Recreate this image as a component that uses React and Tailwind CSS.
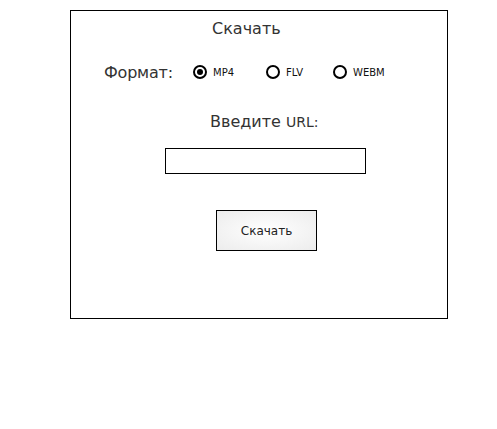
import React from 'react';

function Radio({ label, checked, className = '' }) {
  return (
    <label className={`flex items-center gap-[6px] ${className}`}>
      <span className="w-[14px] h-[14px] rounded-full border-2 border-black flex items-center justify-center">
        {checked && <span className="w-[6px] h-[6px] rounded-full bg-black"></span>}
      </span>
      <span className="text-[10px] leading-[13px] text-[#111]">{label}</span>
    </label>
  );
}

export default function App() {
  return (
    <div className="w-[497px] h-[429px] bg-white pt-[10px] pl-[70px]" style={{ fontFamily: '"DejaVu Sans", sans-serif' }}>
      <div className="w-[378px] h-[309px] border border-black flex flex-col items-start text-[#333]">
        <div className="ml-[141px] mt-[8px] text-[16px] leading-[19px]">Скачать</div>

        <div className="ml-[33px] mt-[24px] h-[20px] flex items-center">
          <span className="w-[89px] text-[16px] leading-[19px] tracking-[-0.2px]">Формат:</span>
          <Radio label="MP4" checked className="w-[73px]" />
          <Radio label="FLV" className="w-[67px]" />
          <Radio label="WEBM" />
        </div>

        <div className="ml-[139px] mt-[30px] text-[16px] leading-[19px]">
          Введите <span className="text-[14px]">URL:</span>
        </div>

        <input
          type="text"
          className="ml-[94px] mt-[16px] w-[201px] h-[26px] border border-black bg-white outline-none"
        />

        <button className="ml-[145px] mt-[36px] w-[101px] h-[41px] border border-black bg-radial from-white to-[#ececec] text-[12px] text-[#222]">
          Скачать
        </button>
      </div>
    </div>
  );
}
